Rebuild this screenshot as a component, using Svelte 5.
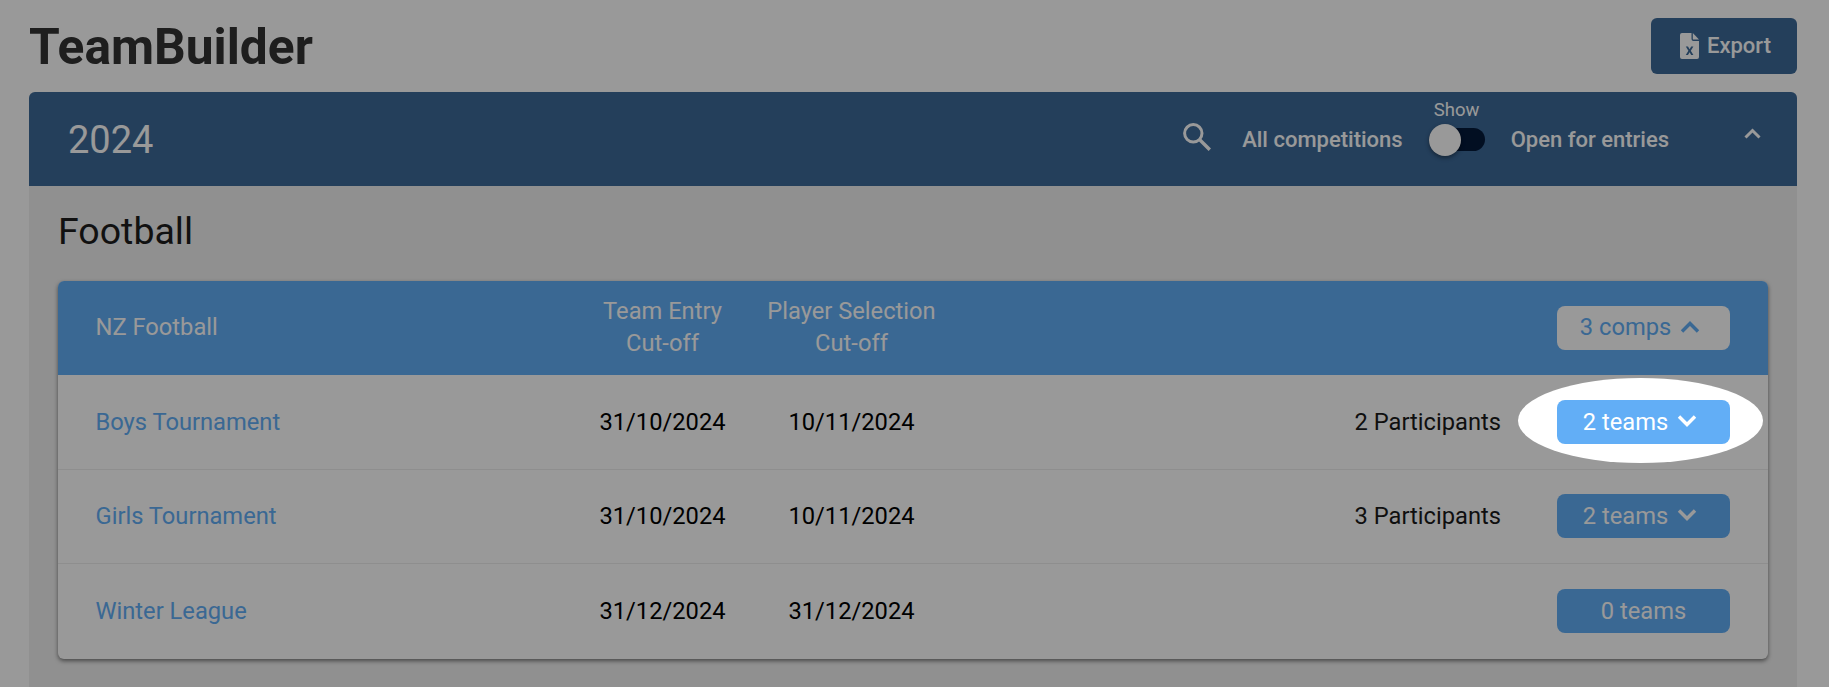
<script>
	const comps = [
		{ name: "Boys Tournament", entry: "31/10/2024", selection: "10/11/2024", participants: "2 Participants", teams: "2 teams", chevron: true, active: true },
		{ name: "Girls Tournament", entry: "31/10/2024", selection: "10/11/2024", participants: "3 Participants", teams: "2 teams", chevron: true },
		{ name: "Winter League", entry: "31/12/2024", selection: "31/12/2024", participants: "", teams: "0 teams" }
	];
</script>

<div class="page">
	<div class="topbar">
		<h1>TeamBuilder</h1>
		<button class="export">
			<svg width="19" height="26" viewBox="0 0 19 26">
				<path fill-rule="evenodd" fill="currentColor" d="M2 0H11.500V6Q11.500 8 13.500 8H19V24Q19 26 17 26H2Q0 26 0 24V2Q0 0 2 0ZM5.800 13.500H8L9.600 16.200L11.200 13.500H13.400L10.800 17.700L13.400 22H11.200L9.600 19.300L8 22H5.800L8.400 17.700Z" />
				<path fill="currentColor" d="M12.800 0L19 6.500H13.500Q12.800 6.500 12.800 6Z" />
			</svg>
			Export
		</button>
	</div>

	<section class="panel">
		<header class="panel-head">
			<span class="year">2024</span>
			<div class="filters">
				<svg class="search" width="28" height="28" viewBox="0 0 28 28">
					<circle cx="10.300" cy="10.300" r="8.700" fill="none" stroke="currentColor" stroke-width="3" />
					<path d="M16.500 16.500L26.800 26.800" stroke="currentColor" stroke-width="3.400" />
				</svg>
				<span class="filter-label">All competitions</span>
				<div class="toggle-col">
					<span class="show">Show</span>
					<div class="switch"><span class="thumb"></span></div>
				</div>
				<span class="filter-label">Open for entries</span>
				<svg class="collapse" width="17" height="11" viewBox="0 0 17 11">
					<path d="M1.500 9.500L8.500 2.500L15.500 9.500" fill="none" stroke="currentColor" stroke-width="3" />
				</svg>
			</div>
		</header>

		<div class="panel-body">
			<h2>Football</h2>
			<div class="card">
				<div class="row head">
					<span>NZ Football</span>
					<span class="date">Team Entry<br />Cut-off</span>
					<span class="date">Player Selection<br />Cut-off</span>
					<span></span>
					<button class="count light">
						3 comps
						<svg width="20" height="12" viewBox="0 0 20 12">
							<path d="M2 10.500L10 2.500L18 10.500" fill="none" stroke="currentColor" stroke-width="3.400" />
						</svg>
					</button>
				</div>
				{#each comps as comp}
					<div class="row">
						<a href="#top">{comp.name}</a>
						<span class="date">{comp.entry}</span>
						<span class="date">{comp.selection}</span>
						<span class="participants">{comp.participants}</span>
						<div class="action">
							<button class="count">
								{comp.teams}
								{#if comp.chevron}
									<svg width="20" height="12" viewBox="0 0 20 12">
										<path d="M2 1.500L10 9.500L18 1.500" fill="none" stroke="currentColor" stroke-width="3.400" />
									</svg>
								{/if}
							</button>
							{#if comp.active}
								<div class="spotlight"></div>
							{/if}
						</div>
					</div>
				{/each}
			</div>
		</div>
	</section>
</div>

<style>
	:global(html), :global(body) {
		margin: 0;
		overflow: hidden;
	}

	.page {
		height: 100vh;
		overflow: hidden;
		background: #fff;
		font-family: Roboto, sans-serif;
		display: flex;
		flex-direction: column;
		box-sizing: border-box;
		padding: 0 32px 0 29px;
	}

	.topbar {
		height: 92px;
		flex: none;
		display: flex;
		justify-content: space-between;
		align-items: flex-start;
	}

	h1 {
		margin: 19px 0 0;
		font-size: 49.700px;
		line-height: 56px;
		font-weight: 700;
		color: #333;
	}

	button {
		font-family: inherit;
		border: none;
	}

	.export {
		margin-top: 18px;
		width: 146px;
		height: 56px;
		border-radius: 6px;
		background: #3c6998;
		color: #fff;
		font-size: 22px;
		font-weight: 500;
		display: flex;
		align-items: center;
		justify-content: center;
		gap: 8px;
		padding: 0 0 1px 3px;
	}

	.panel {
		flex: 1;
		background: #f0f0f0;
		border-radius: 6px 6px 0 0;
	}

	.panel-head {
		height: 94px;
		background: #3c6998;
		color: #fff;
		border-radius: 6px 6px 0 0;
		display: flex;
		justify-content: space-between;
		align-items: center;
		padding: 0 36px 0 39px;
	}

	.year {
		font-size: 38px;
		font-weight: 400;
		padding-top: 2px;
	}

	.filters {
		display: flex;
		align-items: center;
	}

	.search {
		margin: 0 31px 4px 0;
	}

	.filter-label {
		font-size: 22px;
		font-weight: 500;
	}

	.toggle-col {
		display: flex;
		flex-direction: column;
		align-items: center;
		margin: 0 26px 21px;
		gap: 5px;
	}

	.show {
		font-size: 18.500px;
		line-height: 18px;
	}

	.switch {
		position: relative;
		width: 56px;
		height: 23px;
		margin: 4px 0 5px;
		border-radius: 12px;
		background: #04193a;
	}

	.thumb {
		position: absolute;
		left: 0;
		top: -4px;
		width: 32px;
		height: 32px;
		border-radius: 50%;
		background: #fff;
		box-shadow: 0 2px 4px rgba(0, 0, 0, 0.4);
	}

	.collapse {
		margin: 0 0 11px 75px;
	}

	.panel-body {
		padding: 20px 29px 0;
	}

	h2 {
		margin: 0 0 24px;
		font-size: 37.500px;
		line-height: 51px;
		font-weight: 400;
		color: #1d1d1d;
	}

	.card {
		background: #fff;
		border-radius: 6px;
		box-shadow: 0 2px 4px rgba(0, 0, 0, 0.5);
	}

	.row {
		height: 94.400px;
		box-sizing: border-box;
		display: grid;
		grid-template-columns: 472.500px 189px 189px 1fr 173px;
		align-items: center;
		padding: 0 38px 0 37.500px;
		font-size: 23.700px;
		border-bottom: 1px solid #ededed;
		color: #1a1a1a;
	}

	.row:last-child {
		border-bottom-color: transparent;
	}

	.row.head {
		background: #62aef6;
		color: #fff;
		line-height: 32px;
		border-radius: 6px 6px 0 0;
		border-bottom-color: #62aef6;
	}

	.row.head > span {
		margin-bottom: 2px;
	}

	.row a {
		color: #62aef6;
		text-decoration: none;
	}

	.date {
		text-align: center;
	}

	.row:not(.head) .date {
		color: #000;
	}

	.participants {
		text-align: right;
		padding-right: 56px;
	}

	.action {
		position: relative;
	}

	.count {
		width: 173px;
		height: 44px;
		padding: 0;
		border-radius: 8px;
		background: #62aef6;
		color: #fff;
		font-size: 23.700px;
		display: flex;
		align-items: center;
		justify-content: center;
		gap: 9px;
	}

	.count svg {
		margin: 0 7px 2px 0;
	}

	.count.light {
		background: #fff;
		color: #62aef6;
		padding-bottom: 2px;
	}

	.count.light svg {
		margin-bottom: 0;
	}

	.spotlight {
		position: absolute;
		left: -39px;
		top: -22px;
		width: 245px;
		height: 85px;
		border-radius: 50%;
		z-index: 1;
		pointer-events: none;
		box-shadow: 0 0 0 3000px rgba(0, 0, 0, 0.4);
	}
</style>
